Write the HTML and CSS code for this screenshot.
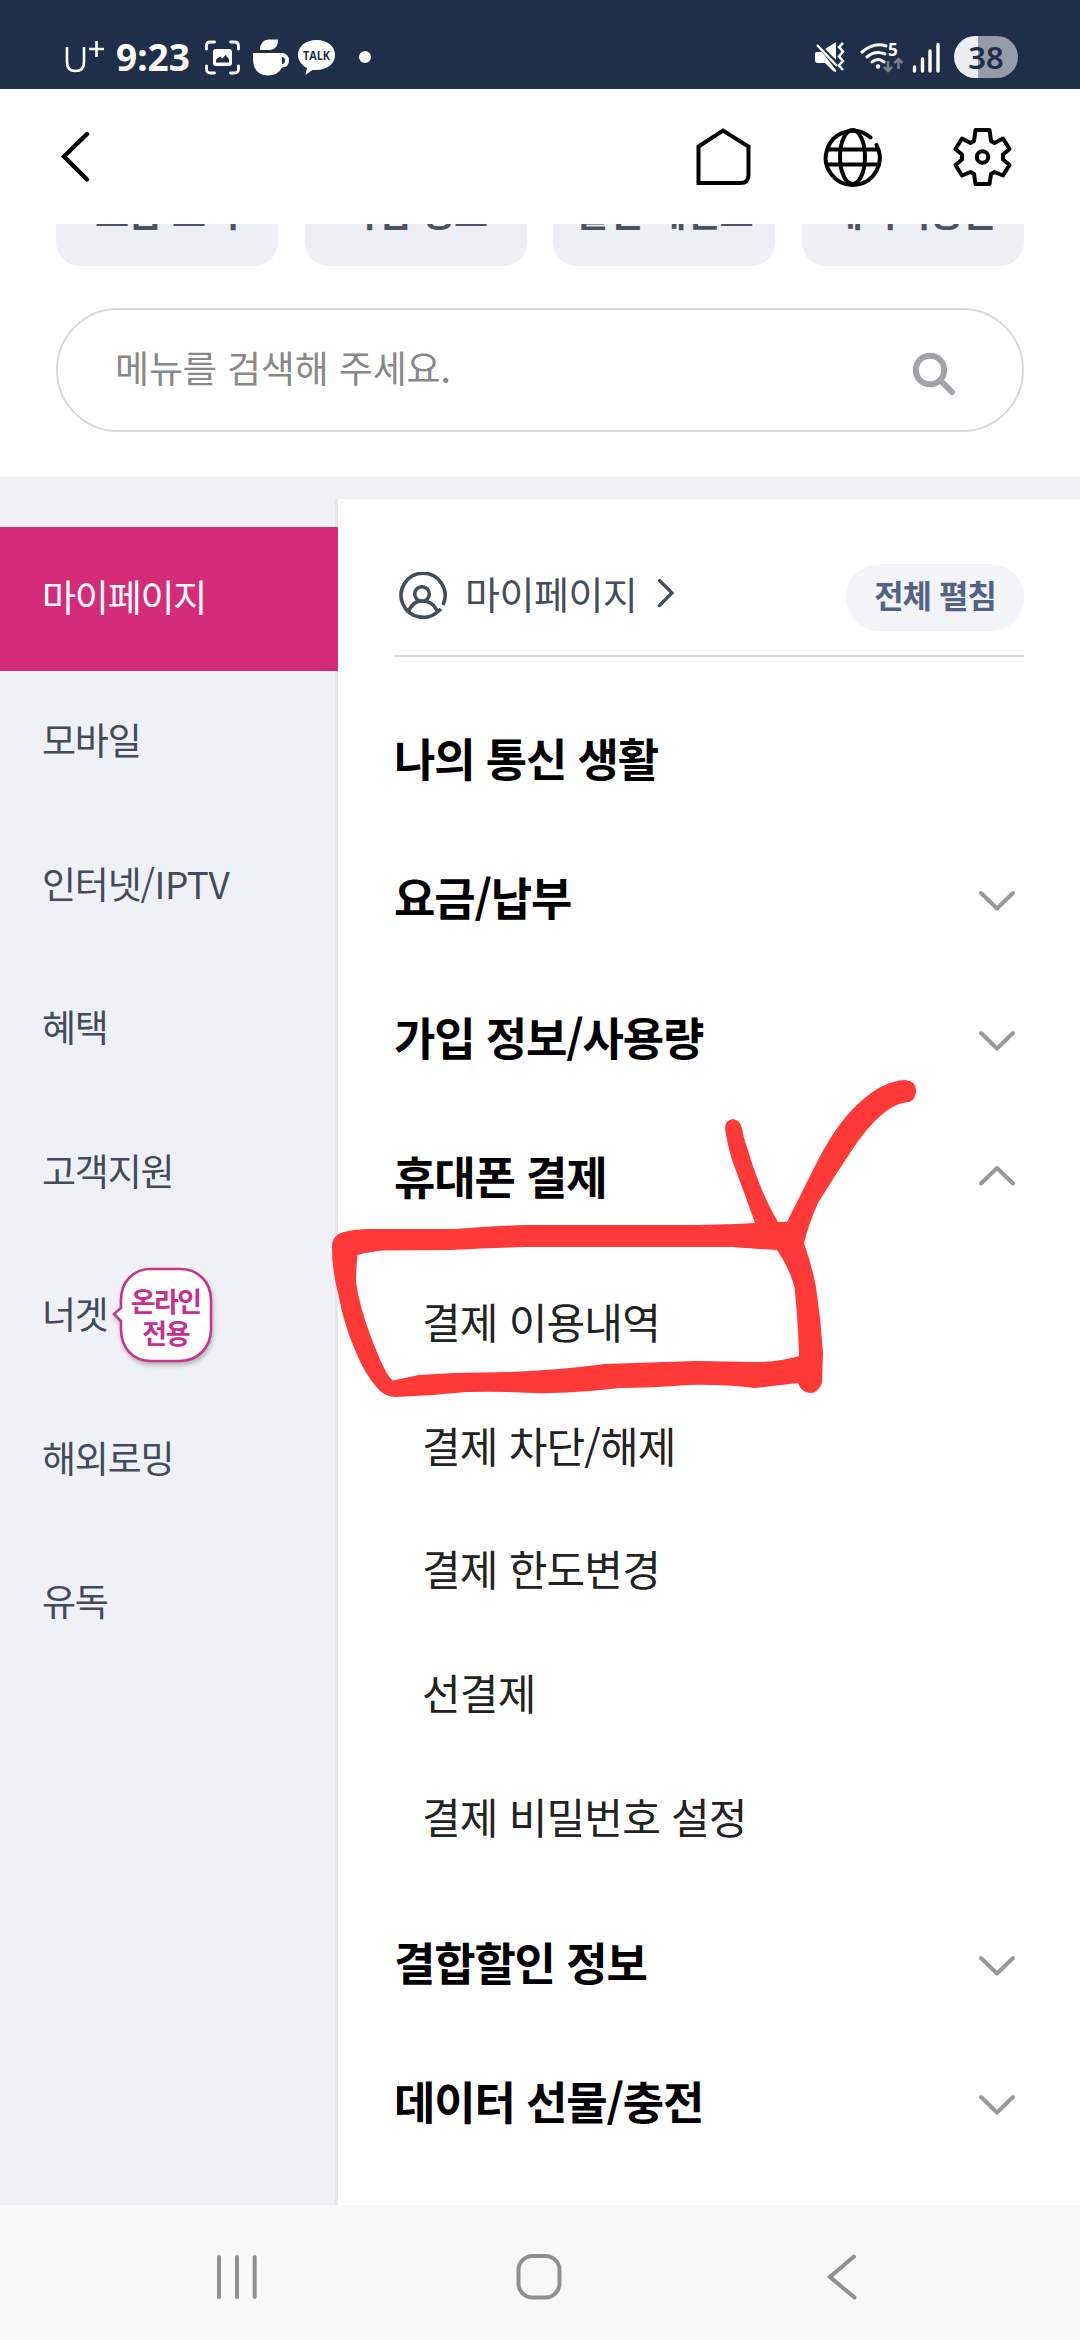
FILE: index.html
```html
<!DOCTYPE html>
<html lang="ko">
<head>
<meta charset="utf-8">
<title>전체 메뉴</title>
<link rel="stylesheet" href="styles.css">
</head>
<body>
<div class="phone">
  <header class="status">
    <div class="status-left">
      <svg class="carrier" viewBox="65 39 40 34" width="40" height="34"><path d="M67 46v15q0 9 8.500 9t8.500-9V46M96.500 40v16M89 48h15" fill="none" stroke="#fff" stroke-width="2.600"/></svg>
      <span class="clock">9:23</span>
      <svg class="st-shot" viewBox="204 39 37 37" width="37" height="37"><path d="M206.500 49v-3q0-4 4-4h4M230.500 42h4q4 0 4 4v3M238.500 66v3q0 4-4 4h-4M214.500 73h-4q-4 0-4-4v-3" fill="none" stroke="#fff" stroke-width="2.800" stroke-linecap="round"/><rect x="213" y="49" width="19" height="17" rx="3" fill="#fff"/><path d="M216 62.500v-3l4-3 2.500 2 3-3.500 3.500 4v3.500z" fill="#1f2e49"/></svg>
      <svg class="st-cup" viewBox="252 38 38 38" width="38" height="38"><path d="M260 50q0-10 9-10.500h9q0 10-8 10.500z" fill="#fff"/><path d="M253 53h29q7 1 7 7.500t-7 7q-4 8-14.500 8Q253 75 253 58z" fill="#fff"/><path d="M282 57q3 0 3 3.500t-3 3.500z" fill="#1f2e49"/></svg>
      <svg class="st-talk" viewBox="297 39 39 37" width="39" height="37"><path d="M316.500 40c11 0 18.500 6.500 18.500 15s-7.500 15-19 15c-2 0-3 0-4 .2L305.500 75l1.500-7c-5-2.500-9-7-9-13 0-8.500 7.500-15 18.500-15z" fill="#fff"/><text x="303" y="59.500" class="talk-text" textLength="27" lengthAdjust="spacingAndGlyphs">TALK</text></svg>
      <span class="dot"></span>
    </div>
    <div class="status-right">
      <svg viewBox="813 41 32 32" width="32" height="32"><path d="M815 52h6l14 18v2q-2 0-4-2l-7-7h-7q-3 0-3-3v-5q0-3 1-3zM824 49l11-7v19z" fill="#fff"/><path d="M817 44l19 19" stroke="#1f2e49" stroke-width="3"/><path d="M816 45l20 21" stroke="#fff" stroke-width="2.500"/><path d="M842 43l-4 4 4 4.500-4 5 4 4.500-4 4.500 4 4.500" fill="none" stroke="#fff" stroke-width="2.500"/></svg>
      <svg class="st-wifi" viewBox="858 40 46 34" width="46" height="34"><path d="M861 52q12-10 24-6M866 57q8-7 18-3M871 62q6-5 12 0" fill="none" stroke="#fff" stroke-width="3" stroke-linecap="round"/><circle cx="877" cy="66.500" r="2.200" fill="#fff"/><text x="887" y="56" class="wifi-num">5</text><path d="M887 61v10m-4-4l4 4 4-4M897.500 69V59m-4 4l4-4 4 4" fill="none" stroke="#79818f" stroke-width="2.500"/></svg>
      <svg class="st-signal" viewBox="911 41 30 31" width="30" height="31"><path d="M913.500 66v4M921.500 58v12M929 50v20M937 43.500v26.500" stroke="#fff" stroke-width="3.400" stroke-linecap="round"/></svg>
      <span class="battery">38</span>
    </div>
  </header>

  <nav class="topbar">
    <svg viewBox="60 132 30 52" width="30" height="52"><path d="M87 135L64 157.500 87 180.500" fill="none" stroke="#000" stroke-width="4.400" stroke-linecap="round"/></svg>
    <div class="top-actions">
      <svg viewBox="694 125 58 62" width="58" height="62"><path d="M698.500 145.500L723 129.500l25.500 16V174q0 8-8 8h-42z" fill="none" stroke="#000" stroke-width="4"/></svg>
      <svg viewBox="821 126 61 62" width="61" height="62"><g fill="none" stroke="#000" stroke-width="4"><path d="M870.500 137.500A27 27 0 1 0 876.500 145" stroke-linecap="round"/><ellipse cx="852.500" cy="157" rx="12.500" ry="27"/><path d="M827 149.500h50M827 164.500h50"/></g></svg>
      <svg viewBox="951 125 63 62" width="63" height="62"><g fill="none" stroke="#000" stroke-width="4" stroke-linejoin="round"><path d="M975.500 129H989.500L991 140L994.500 142L1003 137.500L1009.500 148L1003 153.500V158.500L1009.500 164L1003 174.500L994.500 171L991 173L989.500 183H975.500L974 173L970.500 171L962 174.500L955.500 164L962 158.500V153.500L955.500 148L962 137.500L970.500 142L974 140Z"/><circle cx="982.500" cy="156" r="5.700"/></g></svg>
    </div>
  </nav>

  <div class="chips">
    <span class="chip">요금 조회</span>
    <span class="chip">가입 정보</span>
    <span class="chip">할인 세일즈</span>
    <span class="chip">데이터용돈</span>
  </div>

  <div class="search">
    <span class="search-text">메뉴를 검색해 주세요.</span>
    <svg viewBox="911 351 46 46" width="46" height="46"><circle cx="930" cy="370" r="14.200" fill="none" stroke="#a2a3a8" stroke-width="6"/><path d="M941 381l11 11" stroke="#a2a3a8" stroke-width="6" stroke-linecap="round"/></svg>
  </div>

  <div class="body">
    <aside class="side">
      <div class="side-item active">마이페이지</div>
      <div class="side-item">모바일</div>
      <div class="side-item">인터넷<span class="latin">/IPTV</span></div>
      <div class="side-item">혜택</div>
      <div class="side-item">고객지원</div>
      <div class="side-item">너겟
        <span class="bubble">
          <svg class="bubble-shape" viewBox="112 1266 104 104" width="104" height="104"><path d="M151 1270h29c18 0 31 13 31 31v29c0 18-13 32-31 32h-29c-18 0-30-13-30-32v-8l-7-7 7-6v-8c0-18 12-31 30-31z" fill="#fff" stroke="#c8368a" stroke-width="2.600"/></svg>
          <b>온라인</b><b>전용</b>
        </span>
      </div>
      <div class="side-item">해외로밍</div>
      <div class="side-item">유독</div>
    </aside>

    <main class="main">
      <div class="section-head">
        <svg viewBox="398 572 50 50" width="50" height="50"><g fill="none" stroke="#454d5b" stroke-width="3.600"><path d="M443.500 603.500A22 22 0 1 0 438.500 611" stroke-linecap="round"/><circle cx="422" cy="594" r="7.300"/><path d="M408 613q4-12 14-12t14 8q2 3 5 0"/></g></svg>
        <span class="section-name">마이페이지</span>
        <svg class="go" viewBox="655 576 20 32" width="20" height="32"><path d="M658.500 579.500L671 592l-12.500 12.500" fill="none" stroke="#454d5b" stroke-width="3.200" stroke-linecap="round"/></svg>
        <span class="expand">전체 펼침</span>
      </div>

      <div class="menu">
        <div class="menu-row">나의 통신 생활</div>
        <div class="menu-row">요금/납부<svg class="chev" viewBox="0 0 38 22"><path d="M3 3l16 15.500L35 3"/></svg></div>
        <div class="menu-row">가입 정보/사용량<svg class="chev" viewBox="0 0 38 22"><path d="M3 3l16 15.500L35 3"/></svg></div>
        <div class="menu-row">휴대폰 결제<svg class="chev up" viewBox="0 0 38 22"><path d="M3 18.500L19 3l16 15.500"/></svg></div>
        <div class="submenu">
          <div class="sub-row">결제 이용내역</div>
          <div class="sub-row">결제 차단/해제</div>
          <div class="sub-row">결제 한도변경</div>
          <div class="sub-row">선결제</div>
          <div class="sub-row">결제 비밀번호 설정</div>
        </div>
        <div class="menu-row">결합할인 정보<svg class="chev" viewBox="0 0 38 22"><path d="M3 3l16 15.500L35 3"/></svg></div>
        <div class="menu-row">데이터 선물/충전<svg class="chev" viewBox="0 0 38 22"><path d="M3 3l16 15.500L35 3"/></svg></div>
      </div>
    </main>
  </div>

  <footer class="navbar">
    <svg viewBox="215 2252 44 50" width="44" height="50"><path d="M219 2257v40M237 2257v40M254.700 2257v40" stroke="#909090" stroke-width="4" stroke-linecap="round"/></svg>
    <svg class="nav-home" viewBox="515 2252 48 50" width="48" height="50"><rect x="518.500" y="2256" width="41" height="41.500" rx="14" fill="none" stroke="#909090" stroke-width="4"/></svg>
    <svg viewBox="826 2252 32 50" width="32" height="50"><path d="M854 2256.500L830 2277l24.500 20.500" fill="none" stroke="#909090" stroke-width="4" stroke-linecap="round"/></svg>
  </footer>

  <svg class="marker" viewBox="320 1060 620 360" width="620" height="360"><path fill="#ff3838" fill-rule="evenodd" d="M332 1247Q332 1235 344 1232Q355 1229 371 1229L454 1229Q490 1226 526 1225L676 1225Q720 1225 755 1223Q744 1192 732 1160Q727 1143 725 1128Q725 1120 733 1119Q740 1120 742 1128Q743 1136 747 1147Q760 1192 778 1222L787 1222Q801 1194 818 1160Q838 1122 858 1104Q882 1081 905 1080Q917 1081 916 1092Q915 1100 909 1102Q896 1103 885 1112Q867 1126 850 1153Q834 1177 818 1203Q809 1223 804 1243Q812 1266 816 1287Q821 1320 823 1353L822 1383Q818 1393 810 1393Q801 1392 798 1383L755 1388Q720 1384 688 1385Q650 1388 620 1388Q565 1394 533 1393Q500 1391 466 1392Q430 1396 395 1397Q385 1396 379 1390Q365 1375 355 1350Q344 1325 338 1293Q332 1270 332 1247ZM357.500 1255Q368 1252 383 1250.500L450 1250Q490 1248 526 1247L731 1247L777 1250Q789 1267 794.500 1287Q798 1320 799 1356Q780 1362 755 1362L696 1361L605 1364Q560 1370 510 1372L454 1373L419 1375Q404 1378 393 1380.500Q386 1377 371 1337Q359 1305 356 1282Q356 1270 357.500 1255Z"/></svg>
</div>
</body>
</html>
```
FILE: styles.css
```css
* { box-sizing: border-box; }
body {
  margin: 0;
  font-family: "Noto Sans CJK KR", "Noto Sans", sans-serif;
  background: #fff;
}
svg { display: block; flex: none; }
.phone {
  position: relative;
  width: 1080px;
  height: 2340px;
  display: flex;
  flex-direction: column;
  overflow: hidden;
}
.status {
  height: 89px;
  padding: 25px 62px 0 65px;
  flex: none;
  display: flex;
  justify-content: space-between;
  background: #1f2e49;
  color: #fff;
}
.status-left, .status-right { display: flex; align-items: center; height: 64px; }
.clock {
  width: 76px;
  margin: 0 13px 0 10px;
  font: 700 37px/40px "Noto Sans", sans-serif;
  text-align: center;
}
.st-cup { margin-left: 11px; }
.st-talk { margin-left: 7px; }
.talk-text { font: 700 11.500px "Open Sans", sans-serif; fill: #1f2e49; }
.dot { width: 12px; height: 12px; margin-left: 23px; border-radius: 50%; background: #fff; }
.st-wifi { margin-left: 13px; }
.wifi-num { font: 700 17px "Open Sans", sans-serif; fill: #fff; }
.st-signal { margin-left: 7px; }
.battery {
  width: 64px;
  height: 42px;
  margin-left: 12px;
  border-radius: 21px;
  background: linear-gradient(90deg, #eceff2 24px, #939ca8 24px);
  color: #1f2e49;
  font: 600 31px/42px "Noto Sans", sans-serif;
  text-align: center;
}
.topbar {
  height: 135px;
  padding: 0 66px 0 60px;
  flex: none;
  display: flex;
  align-items: center;
  justify-content: space-between;
}
.top-actions { display: flex; gap: 69px; }
.chips {
  height: 42px;
  padding: 0 56px;
  display: flex;
  align-items: flex-end;
  justify-content: space-between;
  overflow: hidden;
  flex: none;
}
.chip {
  width: 222px;
  height: 102px;
  flex: none;
  border-radius: 24px;
  background: #edeff4;
  color: #4b5263;
  font-size: 37px;
  font-weight: 700;
  line-height: 94px;
  letter-spacing: -0.500px;
  text-align: center;
  white-space: nowrap;
}
.search {
  height: 124px;
  margin: 42px 56px 45px;
  padding: 0 65px 0 57px;
  flex: none;
  display: flex;
  align-items: center;
  justify-content: space-between;
  border: 2px solid #d5d9de;
  border-radius: 62px;
}
.search svg { margin-top: 8px; }
.search-text { color: #888; font-size: 37px; letter-spacing: -0.150px; margin-top: -6px; }
.body {
  flex: 1;
  min-height: 0;
  display: flex;
  background: #f0f1f6;
}
.side {
  position: relative;
  z-index: 1;
  width: 338px;
  padding-top: 50px;
  flex: none;
}
.side-item {
  height: 143.500px;
  padding: 0 0 6px 42px;
  display: flex;
  align-items: center;
  color: #434b5b;
  font-size: 37px;
  letter-spacing: -1.200px;
  white-space: nowrap;
}
.latin { letter-spacing: -0.500px; }
.active { background: #d42c7b; color: #fff; }
.bubble {
  position: relative;
  width: 104px;
  height: 104px;
  margin: 8px 0 0 4px;
  padding: 20px 4px 0 8px;
  display: flex;
  flex-direction: column;
  align-items: center;
  color: #c8308a;
  font-size: 27px;
  line-height: 32px;
  letter-spacing: -1.500px;
}
.bubble b { position: relative; font-weight: 700; }
.bubble-shape {
  position: absolute;
  left: 0;
  top: 0;
  filter: drop-shadow(1px 3px 2px rgba(0, 0, 0, .25));
}
.main {
  flex: 1;
  margin-top: 22px;
  padding: 0 56px;
  background: #fff;
  box-shadow: -3px 0 0 #e6e6e8;
}
.section-head {
  height: 158px;
  padding: 40px 0 0 4px;
  display: flex;
  align-items: center;
  border-bottom: 2px solid #d5d9de;
  color: #454d5b;
}
.section-name { margin: -10px 0 0 17px; font-size: 38px; letter-spacing: -0.500px; }
.go { margin: -9px 0 0 19px; }
.expand {
  width: 178px;
  height: 67px;
  margin-left: auto;
  border-radius: 34px;
  background: #f3f4f7;
  color: #546288;
  font-size: 32px;
  font-weight: 700;
  line-height: 61px;
  letter-spacing: -1px;
  text-align: center;
}
.menu { padding-top: 31px; }
.menu-row {
  height: 139.300px;
  padding-right: 8px;
  display: flex;
  align-items: center;
  justify-content: space-between;
  color: #000;
  font-size: 45px;
  font-weight: 700;
  letter-spacing: -1.200px;
}
.chev { width: 38px; height: 22px; margin-top: 9px; fill: none; stroke: #999; stroke-width: 4; stroke-linecap: round; stroke-linejoin: round; }
.up { margin-top: 1px; }
.submenu { padding: 13px 0 14px 28px; }
.sub-row {
  height: 123.900px;
  display: flex;
  align-items: center;
  color: #222;
  font-size: 42px;
  letter-spacing: -0.800px;
}
.navbar {
  height: 135px;
  padding: 9px 222px 0 215px;
  flex: none;
  display: flex;
  align-items: center;
  justify-content: space-between;
  background: #f8f8f8;
}
.nav-home { margin-right: 7px; }
.marker { position: absolute; left: 320px; top: 1060px; z-index: 2; }
```
